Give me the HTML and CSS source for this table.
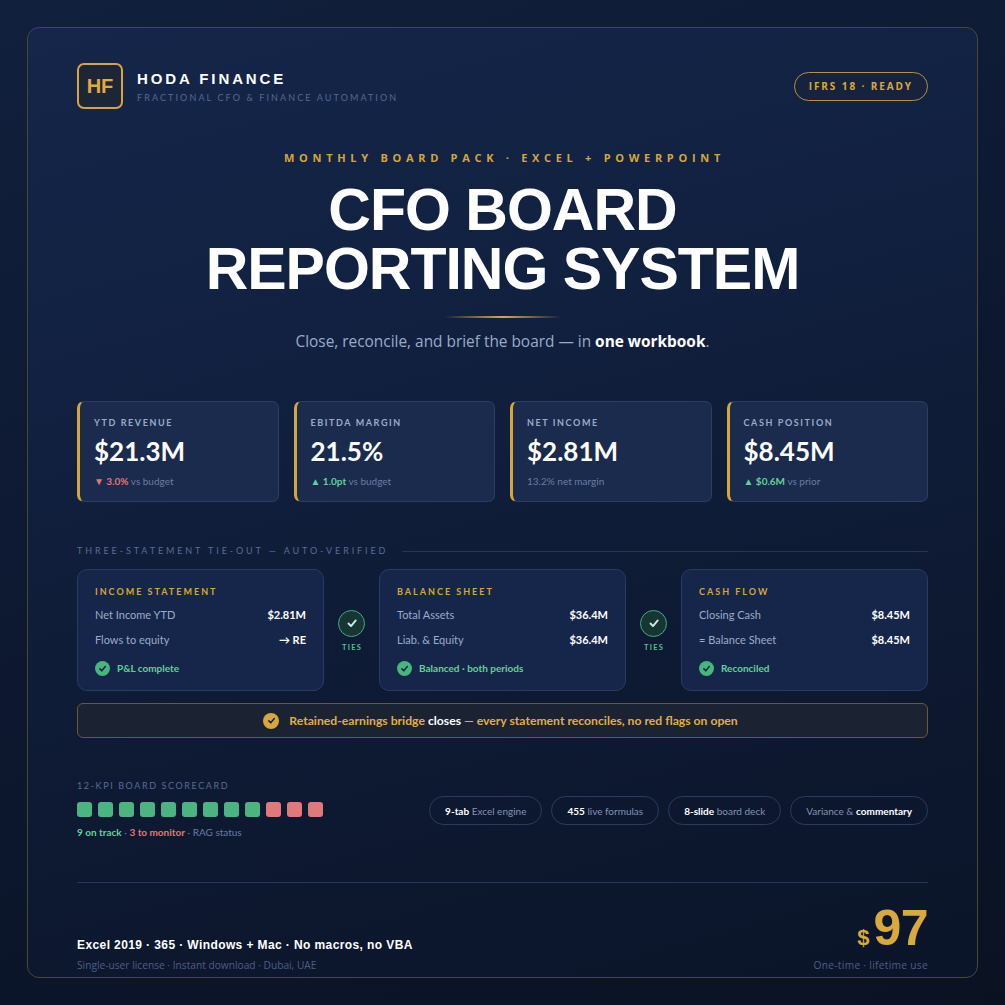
FILE: index.html
```html
<!DOCTYPE html>
<html>
<head>
<meta charset="utf-8">
<link rel="stylesheet" href="styles.css">
</head>
<body>
<div class="frame">
  <header class="header">
    <div class="brand">
      <div class="logo">HF</div>
      <div class="brand-text">
        <div class="brand-name">HODA FINANCE</div>
        <div class="brand-sub">FRACTIONAL CFO &amp; FINANCE AUTOMATION</div>
      </div>
    </div>
    <div class="badge">IFRS 18 · READY</div>
  </header>

  <div class="eyebrow">MONTHLY BOARD PACK · EXCEL + POWERPOINT</div>
  <h1 class="title"><span class="tl">CFO BOARD</span><span class="tl">REPORTING SYSTEM</span></h1>
  <div class="rule"></div>
  <p class="lead">Close, reconcile, and brief the board — in <b>one workbook</b>.</p>

  <section class="kpis">
    <div class="kpi">
      <div class="kpi-label">YTD REVENUE</div>
      <div class="kpi-value">$21.3M</div>
      <div class="kpi-sub"><span class="neg">▼ 3.0%</span> vs budget</div>
    </div>
    <div class="kpi">
      <div class="kpi-label">EBITDA MARGIN</div>
      <div class="kpi-value">21.5%</div>
      <div class="kpi-sub"><span class="pos">▲ 1.0pt</span> vs budget</div>
    </div>
    <div class="kpi">
      <div class="kpi-label">NET INCOME</div>
      <div class="kpi-value">$2.81M</div>
      <div class="kpi-sub">13.2% net margin</div>
    </div>
    <div class="kpi">
      <div class="kpi-label">CASH POSITION</div>
      <div class="kpi-value">$8.45M</div>
      <div class="kpi-sub"><span class="pos">▲ $0.6M</span> vs prior</div>
    </div>
  </section>

  <div class="section-head">
    <span class="section-label">THREE-STATEMENT TIE-OUT — AUTO-VERIFIED</span>
    <span class="section-line"></span>
  </div>

  <section class="ties">
    <div class="stmt">
      <div class="stmt-title">INCOME STATEMENT</div>
      <div class="stmt-row"><span>Net Income YTD</span><b>$2.81M</b></div>
      <div class="stmt-row"><span>Flows to equity</span><b>→ RE</b></div>
      <div class="stmt-status"><span class="dot"><svg viewBox="0 0 16 16"><path d="M5.2 8.4l2 2.1 3.8-4.6"/></svg></span>P&amp;L complete</div>
    </div>
    <div class="link">
      <span class="ring"><svg viewBox="0 0 16 16"><path d="M5.2 8.4l2 2.1 3.8-4.6"/></svg></span>
      <span class="link-text">TIES</span>
    </div>
    <div class="stmt">
      <div class="stmt-title">BALANCE SHEET</div>
      <div class="stmt-row"><span>Total Assets</span><b>$36.4M</b></div>
      <div class="stmt-row"><span>Liab. &amp; Equity</span><b>$36.4M</b></div>
      <div class="stmt-status"><span class="dot"><svg viewBox="0 0 16 16"><path d="M5.2 8.4l2 2.1 3.8-4.6"/></svg></span>Balanced · both periods</div>
    </div>
    <div class="link">
      <span class="ring"><svg viewBox="0 0 16 16"><path d="M5.2 8.4l2 2.1 3.8-4.6"/></svg></span>
      <span class="link-text">TIES</span>
    </div>
    <div class="stmt">
      <div class="stmt-title">CASH FLOW</div>
      <div class="stmt-row"><span>Closing Cash</span><b>$8.45M</b></div>
      <div class="stmt-row"><span>= Balance Sheet</span><b>$8.45M</b></div>
      <div class="stmt-status"><span class="dot"><svg viewBox="0 0 16 16"><path d="M5.2 8.4l2 2.1 3.8-4.6"/></svg></span>Reconciled</div>
    </div>
  </section>

  <div class="banner">
    <span class="gold-dot"><svg viewBox="0 0 16 16"><path d="M5.2 8.4l2 2.1 3.8-4.6"/></svg></span>
    <span>Retained-earnings bridge <em>closes</em> — every statement reconciles, no red flags on open</span>
  </div>

  <section class="score-row">
    <div class="score">
      <div class="score-label">12-KPI BOARD SCORECARD</div>
      <div class="squares">
        <i class="g"></i><i class="g"></i><i class="g"></i><i class="g"></i><i class="g"></i><i class="g"></i><i class="g"></i><i class="g"></i><i class="g"></i><i class="r"></i><i class="r"></i><i class="r"></i>
      </div>
      <div class="score-text"><span class="pos">9 on track</span> · <span class="neg">3 to monitor</span> · RAG status</div>
    </div>
    <div class="chips">
      <span class="chip"><b>9-tab</b> Excel engine</span>
      <span class="chip"><b>455</b> live formulas</span>
      <span class="chip"><b>8-slide</b> board deck</span>
      <span class="chip">Variance &amp; <b>commentary</b></span>
    </div>
  </section>

  <div class="footer-line"></div>

  <footer class="footer">
    <div class="foot-left">
      <div class="compat">Excel 2019 · 365 · Windows + Mac · No macros, no VBA</div>
      <div class="foot-small">Single-user license · Instant download · Dubai, UAE</div>
    </div>
    <div class="foot-right">
      <div class="price"><span class="cur">$</span><span class="amt">97</span></div>
      <div class="foot-small spaced">One-time · lifetime use</div>
    </div>
  </footer>
</div>
</body>
</html>
```

FILE: styles.css
```css
* { box-sizing: border-box; }
html, body { margin: 0; padding: 0; }
body {
  width: 1005px;
  height: 1005px;
  overflow: hidden;
  background: linear-gradient(160deg, #11203d 0%, #0d1830 50%, #0a1222 100%);
  font-family: Lato, "Noto Sans", sans-serif;
  color: #ffffff;
  padding-top: 27px;
}
.frame {
  margin: 0 27px;
  height: 951px;
  border: 1px solid #4a4736;
  border-radius: 12px;
  padding: 35px 49px 0;
  background: linear-gradient(165deg, #15264a 0%, #11203f 35%, #0e1a33 65%, #0b1529 100%);
  display: flex;
  flex-direction: column;
}

/* header */
.header { display: flex; justify-content: space-between; align-items: center; height: 46px; }
.brand { display: flex; align-items: center; gap: 14px; }
.logo {
  width: 46px; height: 46px;
  border: 2px solid #d6a63c;
  border-radius: 7px;
  background: #1d2637;
  color: #e0ab3c;
  font-family: "Liberation Sans", Arial, sans-serif;
  font-weight: 700;
  font-size: 20px;
  display: flex; align-items: center; justify-content: center;
}
.brand-text { display: flex; flex-direction: column; gap: 4px; padding-top: 1px; }
.brand-name {
  font-family: "Liberation Sans", Arial, sans-serif;
  font-weight: 700; font-size: 15px; letter-spacing: 2.9px; line-height: 18px;
  color: #ffffff;
}
.brand-sub { font-size: 9px; letter-spacing: 2.1px; line-height: 12px; color: #56688f; }
.badge {
  height: 29px;
  padding: 0 14px;
  border: 1.5px solid #b88f3c;
  border-radius: 15px;
  background: #17233c;
  color: #d9a93f;
  font-family: "Open Sans", sans-serif;
  font-weight: 700; font-size: 10px; letter-spacing: 1.9px;
  display: flex; align-items: center;
}

/* hero */
.eyebrow {
  margin-top: 42px;
  text-align: center;
  font-family: "Open Sans", sans-serif;
  font-weight: 700; font-size: 11px; letter-spacing: 4.7px; line-height: 14px;
  color: #d4a63c;
  padding-left: 4px;
}
.title {
  margin: 16px 0 0;
  text-align: center;
  font-family: "Liberation Sans", Arial, sans-serif;
  font-weight: 700; font-size: 59px; line-height: 59px; letter-spacing: -1px;
  color: #ffffff;
}
.tl { display: block; height: 59px; }
.rule {
  margin: 17px auto 0;
  width: 118px; height: 2px;
  background: linear-gradient(90deg, rgba(212,166,60,0) 0%, #d9aa40 50%, rgba(212,166,60,0) 100%);
}
.lead {
  margin: 13px 0 0;
  text-align: center;
  font-family: "Open Sans", sans-serif;
  font-size: 15.4px; line-height: 22px;
  color: #9aabc9;
}
.lead b { color: #ffffff; font-weight: 700; }

/* KPI cards */
.kpis { margin-top: 48px; display: grid; grid-template-columns: repeat(4, 1fr); gap: 15px; }
.kpi {
  height: 101px;
  background: #1a2b4d;
  border: 1px solid #2b3d63;
  border-left: 3px solid #d4a63c;
  border-radius: 7px;
  padding: 15px 14px 0;
}
.kpi-label { font-size: 9px; font-weight: 700; letter-spacing: 1.6px; line-height: 12px; color: #9aabc9; }
.kpi-value { margin-top: 7px; font-size: 26px; font-weight: 700; line-height: 30px; color: #ffffff; }
.kpi-sub { margin-top: 8px; font-size: 10px; line-height: 14px; color: #6b7ca2; }
.neg { color: #e57474; font-weight: 700; }
.pos { color: #5fd39a; font-weight: 700; }

/* section head */
.section-head { margin-top: 43px; display: flex; align-items: center; gap: 14px; height: 12px; }
.section-label { font-size: 9px; letter-spacing: 2.9px; line-height: 12px; color: #5a6c93; white-space: nowrap; }
.section-line { flex: 1; height: 1px; background: #26365a; }

/* tie-out */
.ties { margin-top: 12px; display: grid; grid-template-columns: 1fr 55px 1fr 55px 1fr; }
.stmt {
  height: 122px;
  background: #16264a;
  border: 1px solid #2a3b62;
  border-radius: 10px;
  padding: 16px 17px 0;
}
.stmt-title { font-size: 9px; font-weight: 700; letter-spacing: 2px; line-height: 12px; color: #d4a63c; }
.stmt-row {
  display: flex; justify-content: space-between;
  font-size: 11px; line-height: 16px; color: #9aabc9;
  margin-top: 9px;
}
.stmt-row b { color: #ffffff; font-weight: 700; }
.stmt-status {
  margin-top: 12px;
  display: flex; align-items: center; gap: 7px;
  font-size: 10px; font-weight: 700; line-height: 16px; color: #5fd39a;
}
.dot {
  width: 15px; height: 15px; border-radius: 50%;
  background: #47b57e;
  display: flex; align-items: center; justify-content: center;
}
.dot svg, .gold-dot svg { width: 15px; height: 15px; }
.dot path, .gold-dot path { fill: none; stroke: #14243f; stroke-width: 1.6; stroke-linecap: round; stroke-linejoin: round; }
.link { display: flex; flex-direction: column; align-items: center; justify-content: center; gap: 6px; padding-top: 2px; }
.ring {
  width: 27px; height: 27px; border-radius: 50%;
  border: 1.5px solid #3fae7a;
  background: #173535;
  display: flex; align-items: center; justify-content: center;
}
.ring svg { width: 20px; height: 20px; }
.ring path { fill: none; stroke: #c9f0da; stroke-width: 1.5; stroke-linecap: round; stroke-linejoin: round; }
.link-text { font-size: 7.5px; font-weight: 700; letter-spacing: 1.2px; line-height: 10px; color: #4cc48a; padding-left: 1px; }

/* banner */
.banner {
  margin-top: 12px;
  height: 35px;
  background: #1b2232;
  border: 1px solid #6a5a32;
  border-radius: 6px;
  display: flex; align-items: center; justify-content: center; gap: 10px;
  font-size: 12.2px; font-weight: 700; color: #e0ae45;
  padding-right: 4px;
}
.banner em { font-style: normal; color: #ffffff; }
.gold-dot {
  width: 16px; height: 16px; border-radius: 50%;
  background: #d7a73d;
  display: flex; align-items: center; justify-content: center;
}

/* scorecard */
.score-row { margin-top: 42px; display: flex; justify-content: space-between; align-items: center; }
.score-label { font-size: 9px; letter-spacing: 1.6px; line-height: 12px; color: #5a6c93; }
.squares { margin-top: 10px; display: flex; gap: 6px; }
.squares i { display: block; width: 15px; height: 15px; border-radius: 3px; }
.squares .g { background: #4cb57f; }
.squares .r { background: #e07a7a; }
.score-text { margin-top: 8px; font-size: 10px; line-height: 14px; color: #6b7ca2; }
.chips { display: flex; gap: 9px; padding-top: 2px; }
.chip {
  height: 29px;
  padding: 0 15px;
  border: 1px solid #2b3b5f;
  border-radius: 15px;
  display: flex; align-items: center;
  font-size: 10px; color: #8292b4; white-space: pre;
}
.chip b { color: #ffffff; font-weight: 700; }

/* footer */
.footer-line { margin-top: 43px; height: 1px; background: #26365a; }
.footer { margin-top: 20px; display: flex; justify-content: space-between; align-items: flex-end; }
.compat {
  font-family: "Liberation Sans", Arial, sans-serif;
  font-weight: 700; font-size: 12px; letter-spacing: 0.4px; line-height: 16px; color: #ffffff;
}
.foot-small { margin-top: 5px; font-family: "Open Sans", sans-serif; font-size: 10.2px; line-height: 14px; color: #4d5e86; }
.foot-small.spaced { letter-spacing: 0.3px; }
.foot-right { display: flex; flex-direction: column; align-items: flex-end; }
.price { display: flex; align-items: baseline; gap: 4px; line-height: 50px; height: 50px; font-family: "Liberation Sans", Arial, sans-serif; font-weight: 700; color: #d9a83f; }
.cur { font-size: 22px; }
.amt { font-size: 50px; letter-spacing: -0.5px; }
```
